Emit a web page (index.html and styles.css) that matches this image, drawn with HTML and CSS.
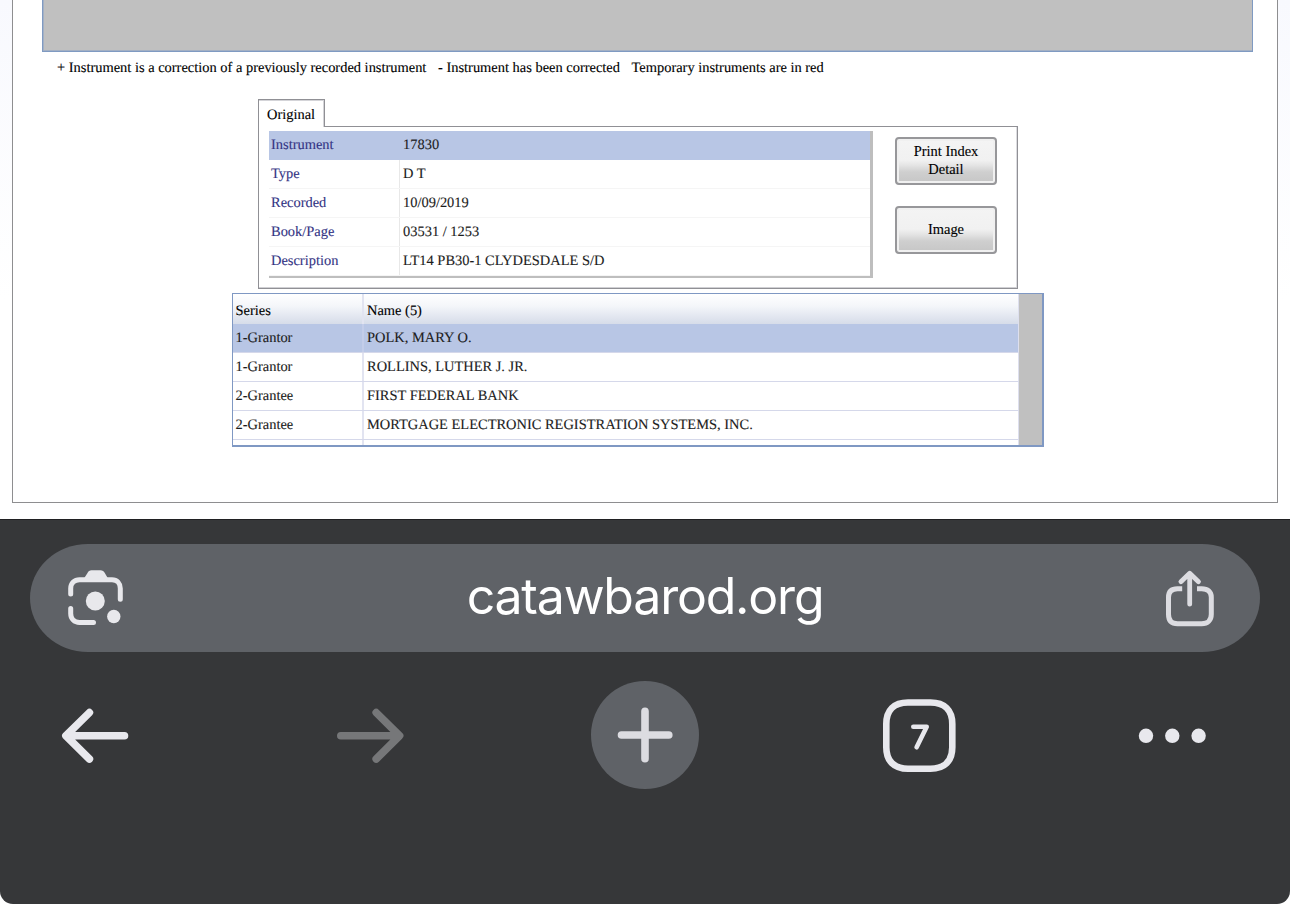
FILE: index.html
```html
<!DOCTYPE html>
<html lang="en">
<head>
<meta charset="utf-8">
<title>catawbarod.org</title>
<link rel="stylesheet" href="styles.css">
</head>
<body>
<main class="page">
  <section class="sheet">
    <div class="results"></div>
    <p class="legend"><span class="legend-a">+ Instrument is a correction of a previously recorded instrument</span><span class="legend-b">- Instrument has been corrected</span><span class="legend-c">Temporary instruments are in red</span></p>
    <div class="detail">
      <div class="tab">Original</div>
      <div class="panel">
        <dl class="fields">
          <div class="field selected"><dt>Instrument</dt><dd>17830</dd></div>
          <div class="field"><dt>Type</dt><dd>D T</dd></div>
          <div class="field"><dt>Recorded</dt><dd>10/09/2019</dd></div>
          <div class="field"><dt>Book/Page</dt><dd>03531 / 1253</dd></div>
          <div class="field"><dt>Description</dt><dd>LT14 PB30-1 CLYDESDALE S/D</dd></div>
        </dl>
        <div class="actions">
          <button class="action">Print Index<br>Detail</button>
          <button class="action">Image</button>
        </div>
      </div>
    </div>
    <div class="names">
      <div class="names-list">
        <div class="name-row head"><span>Series</span><span>Name (5)</span></div>
        <div class="name-row selected"><span>1-Grantor</span><span>POLK, MARY O.</span></div>
        <div class="name-row"><span>1-Grantor</span><span>ROLLINS, LUTHER J. JR.</span></div>
        <div class="name-row"><span>2-Grantee</span><span>FIRST FEDERAL BANK</span></div>
        <div class="name-row"><span>2-Grantee</span><span>MORTGAGE ELECTRONIC REGISTRATION SYSTEMS, INC.</span></div>
        <div class="name-row"><span></span><span></span></div>
      </div>
      <div class="names-gutter"></div>
    </div>
  </section>
</main>
<footer class="browser">
  <div class="omnibox">
    <svg class="lens" width="56" height="56" viewBox="0 0 56 56" fill="none">
      <path d="M2.7 24V18.5C2.7 13 6.5 9.7 11.5 9.7H44C49 9.7 52.3 13.5 52.3 18.5V29.3M2.7 38.5V43.5C2.7 49 6.5 52.5 11.5 52.5H25.5" stroke="#e8e8ec" stroke-width="5" stroke-linecap="round"/>
      <path d="M16 8.5L19.5 3C20.4 1.2 21.5 .3 23.5 .3H32.5C34.5 .3 35.8 1.2 36.8 3L40 8.5V10H16Z" fill="#e8e8ec"/>
      <circle cx="27.3" cy="31" r="9.5" fill="#e8e8ec"/>
      <circle cx="45.8" cy="46.5" r="6.7" fill="#e8e8ec"/>
    </svg>
    <span class="host">catawbarod.org</span>
    <svg class="share" width="50" height="58" viewBox="0 0 50 58" fill="none" stroke="#dcdce1" stroke-width="5">
      <path d="M16.2 19.8H11.5C5.5 19.8 2.5 22.8 2.5 28.3V45.3C2.5 51.3 5.5 54.8 11.5 54.8H35.7C41.7 54.8 45.3 51.3 45.3 45.3V28.3C45.3 22.8 41.7 19.8 35.7 19.8H31"/>
      <path d="M23.7 35.2V5M14.9 12.7L23.7 4.2L32.5 12.7" stroke-width="4.8" stroke-linecap="round" stroke-linejoin="round"/>
    </svg>
  </div>
  <nav class="nav">
    <svg class="nav-item" width="108" height="108" viewBox="0 0 108 108" fill="none" stroke="#e8e8ed" stroke-width="7.6" stroke-linecap="round" stroke-linejoin="round"><path d="M83.5 54.7H25M48.4 31.6L24.9 54.7L48.4 78"/></svg>
    <svg class="nav-item" width="108" height="108" viewBox="0 0 108 108" fill="none" stroke="#767779" stroke-width="7.6" stroke-linecap="round" stroke-linejoin="round"><path d="M24.8 54.7H83M60.2 31.6L83.6 54.7L60.2 78"/></svg>
    <svg class="nav-item" width="108" height="108" viewBox="0 0 108 108" fill="none"><circle cx="54" cy="54" r="54" fill="#5f6267"/><path d="M30.5 54H77.8M54 30.3V77.8" stroke="#dcdce1" stroke-width="7.6" stroke-linecap="round"/></svg>
    <svg class="nav-item" width="108" height="108" viewBox="0 0 108 108" fill="none" stroke="#e8e8ed" stroke-linecap="round" stroke-linejoin="round"><path d="M42 21.5H64.5C78.5 21.5 86.3 29 86.3 43V66.2C86.3 80 78.5 87.7 64.5 87.7H42C28 87.7 20.3 80 20.3 66.2V43C20.3 29 28 21.5 42 21.5Z" stroke-width="6.6"/><path d="M47.3 45.8H60.7L50.6 66.3" stroke-width="4.6"/></svg>
    <svg class="nav-item" width="108" height="108" viewBox="0 0 108 108" fill="#e8e8ed"><circle cx="5" cy="54.8" r="7.2"/><circle cx="31.3" cy="54.8" r="7.2"/><circle cx="57.6" cy="54.8" r="7.2"/></svg>
  </nav>
</footer>
</body>
</html>
```
FILE: styles.css
```css
* { box-sizing: border-box; }
html { background: #fff; }
body { margin: 0; width: 1290px; height: 904px; overflow: hidden; display: flex; flex-direction: column; }
p, dl, dd { margin: 0; }

.page {
  height: 519px;
  padding: 0 12px;
  background: linear-gradient(#f8f9fe, #fff 300px);
  font: 14.45px/18px "Liberation Serif", "Times New Roman", serif;
  text-rendering: geometricPrecision;
  -webkit-text-stroke: 0.12px;
  color: #000;
}
.sheet { height: 503px; background: #fff; border: 1px solid #8e8e90; border-top: 0; }
.results { height: 52px; margin: 0 24px 0 29px; background: #c0c0c0; border: solid #7f9ac2; border-width: 0 1px 1px 1px; box-shadow: inset 1px -1px #a3b0c4; }
.legend { display: flex; height: 47px; padding: 7px 0 0 44px; white-space: nowrap; }
.legend-a { width: 381px; }
.legend-b { width: 193.5px; }

.detail { width: 760px; margin-left: 245px; }
.tab {
  position: relative;
  z-index: 1;
  width: 67px;
  height: 28px;
  margin-bottom: -1px;
  padding: 6px 0 0 8px;
  background: #fff;
  border: 1px solid #909095;
  border-bottom: 0;
  box-shadow: inset 0 1px #d4d4d8, inset -1px 0 #d4d4d8;
}
.panel { display: flex; height: 163px; padding: 4px 20px 0 10px; border: 1px solid #909095; box-shadow: inset 0 -1px #d0d0d4, inset -1px 0 #dcdce0; }
.fields { width: 604px; height: 147px; border: solid #bebebe; border-width: 0 3px 2px 0; }
.field { display: flex; height: 29px; border-bottom: 1px solid #f5f5f5; color: #1c1c1c; }
.field dt { width: 131px; padding: 5px 0 0 2px; border-right: 1px solid #e8e8e8; color: #343484; }
.field dd { padding: 5px 0 0 3px; }
.field.selected { background: #b8c6e5; border-color: #b8c6e5; }
.field.selected dt { border-color: #b8c6e5; }
.actions { display: flex; flex-direction: column; gap: 21px; padding: 6px 0 0 22px; }
.action {
  width: 102px;
  height: 48px;
  padding: 0 0 2px;
  border: 2px solid #97979a;
  border-radius: 4px;
  background: linear-gradient(#f4f4f4 0%, #f1f1f1 48%, #e4e4e4 60%, #cfcfcf 75%, #c6c6c6 100%);
  box-shadow: inset 0 0 0 2px #f0f0f0;
  font: inherit;
  color: #000;
}

.names { display: flex; width: 812px; height: 154px; margin: 4px 0 0 219px; border: solid #7f98c3; border-width: 1px 2px 2px 1px; overflow: hidden; }
.names-list { width: 786px; }
.names-gutter { flex: 1; background: #c0c0c0; }
.name-row { display: flex; height: 29px; border-bottom: 1px solid #d5d8ea; border-right: 1px solid #dddfee; color: #1c1c1c; white-space: nowrap; }
.name-row span { padding: 5px 0 0 3px; }
.name-row span:first-child { width: 131px; padding-left: 2.5px; border-right: 2px solid #e2e4f1; }
.name-row.head { height: 30px; border-bottom: 0; background: linear-gradient(#fff, #f4f6fa 40%, #d6dce9); color: #000; }
.name-row.head span { padding-top: 8px; }
.name-row.selected { background: #b8c6e5; }
.name-row.selected span:first-child { border-color: #c3cde9; }

.browser { height: 385px; padding: 24px 30px 0; background: #363739; border-top: 1px solid #202022; border-radius: 0 0 13px 13px; }
.omnibox {
  display: flex;
  align-items: center;
  justify-content: space-between;
  height: 108px;
  padding: 0 44px 0 38px;
  border-radius: 58px / 54px;
  background: #5f6267;
}
.host { padding-bottom: 5px; font: 50px/60px Inter, sans-serif; color: #fff; letter-spacing: -1.2px; }
.nav { display: flex; justify-content: space-between; padding: 29px 11px 0; }
.nav-item { display: block; overflow: visible; }
```
